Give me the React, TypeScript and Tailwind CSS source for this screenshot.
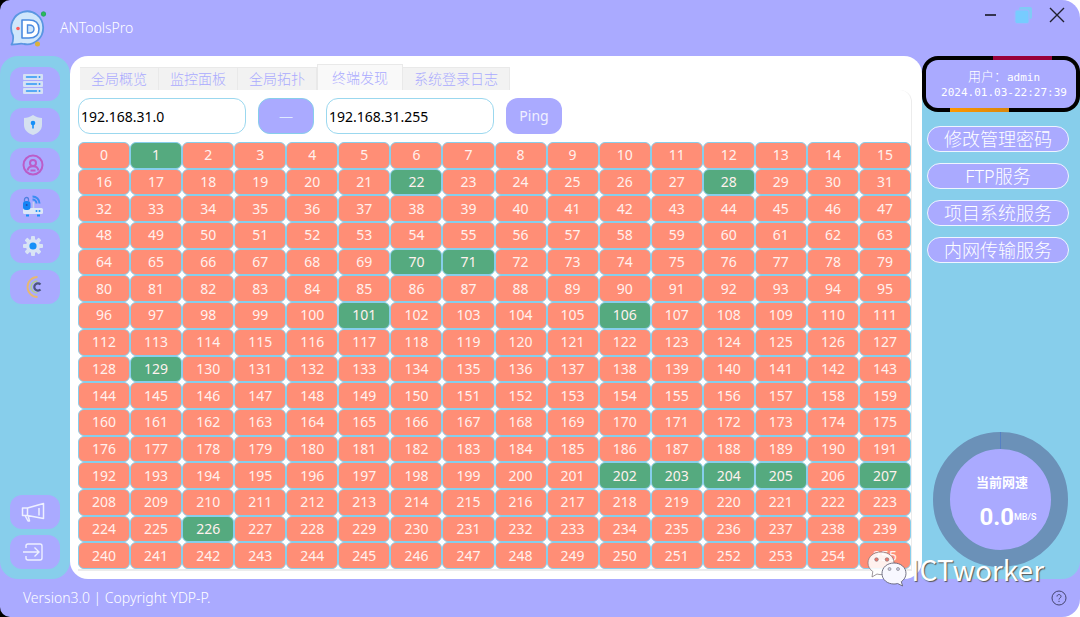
import React from "react";
import clsx from "clsx";

const tabs = ["全局概览", "监控面板", "全局拓扑", "终端发现", "系统登录日志"];
const activeTab = "终端发现";

const services = ["修改管理密码", "FTP服务", "项目系统服务", "内网传输服务"];

// last octets that answered the ping
const online = [1, 22, 28, 70, 71, 101, 106, 129, 202, 203, 204, 205, 207, 226];
const hosts = Array.from({ length: 256 }, (_, i) => i);

const Logo = () => (
  <svg width="38" height="38" viewBox="0 0 38 38" fill="none">
    <path
      d="M1.500 35.500c2-3 2-5 1.500-9A16 16.500 0 1 1 14 35C10 34 7 35.500 1.500 35.500z"
      fill="#cfe6fb"
      stroke="#5a96e2"
      strokeWidth="1.800"
      strokeLinejoin="round"
    />
    <path
      d="M12 11h7c6 0 10 3 10 9S25 29 19 29h-7z"
      fill="#fff"
      stroke="#4b8be0"
      strokeWidth="1.600"
      strokeLinejoin="round"
    />
    <path
      d="M17.500 16h1.500c3.500 0 5 1.500 5 4s-1.500 4-5 4h-1.500z"
      fill="#cfe6fb"
      stroke="#4b8be0"
      strokeWidth="1.400"
    />
    <circle cx="8" cy="19.500" r="1.800" fill="#ff5c5c" />
    <circle cx="33.500" cy="5" r="2.200" fill="#2dbb55" stroke="#27a56a" />
    <circle cx="27.500" cy="35" r="2.500" fill="#dcb13a" />
  </svg>
);

const ServerIcon = () => (
  <svg width="20" height="20" viewBox="0 0 20 20">
    {[0, 7, 14].map((y) => (
      <g key={y}>
        <rect x="0" y={y} width="20" height="6" rx="1" fill="#d5e1f5" />
        <path d={`M3.500 ${y + 3}h10`} stroke="#2a96f5" strokeWidth="1.500" strokeLinecap="round" />
        <circle cx="16.500" cy={y + 3} r="1" fill="#2a96f5" />
      </g>
    ))}
  </svg>
);

const ShieldIcon = () => (
  <svg width="20" height="20" viewBox="0 0 20 20">
    <path d="M10 0c3 2 6 2.800 9 3v7c0 5-4 8.500-9 10-5-1.500-9-5-9-10V3c3-.2 6-1 9-3z" fill="#d5e1f0" />
    <circle cx="10" cy="8" r="2.300" fill="#1590f8" />
    <path d="M10 8v5.500" stroke="#1590f8" strokeWidth="1.600" />
  </svg>
);

const UserIcon = () => (
  <svg width="22" height="22" viewBox="0 0 22 22" fill="none" stroke="#bb5cc8" strokeWidth="2">
    <circle cx="11" cy="11" r="9.500" />
    <circle cx="11" cy="9" r="3" />
    <path d="M5.500 16.500c.5-3 2.500-4.300 5.500-4.300s5 1.300 5.500 4.300" />
    <path d="M8.500 16.500h5" />
  </svg>
);

const RouterIcon = () => (
  <svg width="22" height="22" viewBox="0 0 22 22" fill="none">
    <path d="M11.500 7v6" stroke="#c9d5ea" strokeWidth="1.500" />
    <rect x="1" y="13" width="20" height="6" rx="1.500" fill="#dde7f7" />
    <rect x="1" y="6" width="7.500" height="9" rx="3" fill="#1685f5" />
    <path d="M2.500 7V4.500a2 2 0 0 1 4 0V7" stroke="#4f7fe0" strokeWidth="1.300" />
    <circle cx="4.700" cy="10" r="1" fill="#2a4bb0" />
    <path d="M10.500 1.500c4 0 7 3 7 7M10.500 4.500c2.300 0 4 1.700 4 4" stroke="#3a8df2" strokeWidth="2" />
    <path d="M4 20.500h3M15 20.500h3" stroke="#1b90f5" strokeWidth="1.800" />
    <circle cx="14.500" cy="16" r="1" fill="#1b90f5" />
    <circle cx="17.500" cy="16" r="1" fill="#1b90f5" />
  </svg>
);

const GearIcon = () => (
  <svg width="20" height="20" viewBox="0 0 20 20">
    <circle cx="10" cy="10" r="7" fill="#d9e4f5" />
    {[0, 45, 90, 135].map((a) => (
      <rect key={a} x="8" y="0" width="4" height="20" rx="1" fill="#d9e4f5" transform={`rotate(${a} 10 10)`} />
    ))}
    <circle cx="10" cy="10" r="3.600" fill="#1590f8" />
  </svg>
);

const CIcon = () => (
  <svg width="22" height="22" viewBox="0 0 22 22" fill="none">
    <path d="M15.500 1a10 10 0 0 0 0 20" stroke="#e8b871" strokeWidth="1.800" />
    <path d="M15.500 5a6.500 6 0 0 0 0 12" stroke="#b3cd8f" strokeWidth="1.600" />
    <path d="M18.500 8.500a3.600 3.600 0 1 0 0 5" stroke="#4c5580" strokeWidth="2.200" />
  </svg>
);

const HornIcon = () => (
  <svg width="24" height="20" viewBox="0 0 24 20" fill="none" stroke="#eef0ff" strokeWidth="1.500" strokeLinejoin="round">
    <path d="M1.500 6h5v7.500h-5zM6.500 6 22.500 1.500v15L6.500 13.500M18 6v7.500M4 13.500l3 5.500h1.500l-1.500-5.500" />
  </svg>
);

const ExitIcon = () => (
  <svg width="22" height="20" viewBox="0 0 22 20" fill="none" stroke="#eef0ff" strokeWidth="1.400">
    <path d="M4 6V4a2 2 0 0 1 2-2h12a2 2 0 0 1 2 2v12a2 2 0 0 1-2 2H6a2 2 0 0 1-2-2v-2" />
    <path d="M1 10h15.500M12.500 5.500 17 10l-4.500 4.500" />
  </svg>
);

const WechatIcon = () => (
  <svg width="40" height="36" viewBox="0 0 40 36">
    <path
      d="M14 1C6.500 1 1 5.800 1 12c0 3.600 1.800 6.500 4.800 8.500L5 26l5-3c1.300.4 2.600.6 4 .6C21.500 23.600 27 18.500 27 12S21.500 1 14 1z"
      fill="#fff"
      fillOpacity=".88"
      stroke="#776f76"
      strokeWidth=".7"
    />
    <circle cx="9.500" cy="8.500" r="1.800" fill="#ee786c" stroke="#776f76" strokeWidth=".6" />
    <circle cx="20" cy="8.500" r="1.800" fill="#ee786c" stroke="#776f76" strokeWidth=".6" />
    <path
      d="M27 12c-6.700 0-12 4.300-12 10.500s5.300 10.500 12 10.500c1.300 0 2.500-.2 3.600-.5l5 2.500-1.300-4.300C37.200 28.700 39 25.800 39 22.500 39 16.300 33.700 12 27 12z"
      fill="#f8f8ff"
      stroke="#66667a"
      strokeWidth=".9"
    />
    <circle cx="22.500" cy="18" r="1.500" fill="#c9c9e8" stroke="#777" strokeWidth=".6" />
    <circle cx="31" cy="18" r="1.500" fill="#c9c9e8" stroke="#777" strokeWidth=".6" />
  </svg>
);

interface SideButtonProps {
  label: string;
  children: React.ReactNode;
}

const SideButton: React.FC<SideButtonProps> = ({ label, children }) => (
  <button
    aria-label={label}
    className="flex h-[34px] w-[50px] items-center justify-center rounded-xl bg-[#aaaaff] pr-1"
  >
    {children}
  </button>
);

const inputClass =
  "h-9 w-[168px] rounded-xl border border-[#9bd8ef] bg-white px-[2px] text-sm text-black outline-none";

const App: React.FC = () => {
  return (
    <div className="bg-[linear-gradient(to_right,#000_50%,#fff_50%)] font-['Noto_Sans','Noto_Sans_CJK_SC',sans-serif] text-sm text-white">
      <div className="relative flex min-h-screen flex-col overflow-hidden rounded-l-[10px] rounded-r-[18px] bg-[#aaaaff]">
        <header className="flex h-14 shrink-0 items-start justify-between pr-[14px] pl-[10px]">
          <div className="flex h-14 items-center gap-3">
            <Logo />
            <h1 className="font-light">ANToolsPro</h1>
          </div>
          <div className="flex h-[30px] items-center gap-4">
            <button aria-label="minimize" className="px-[2px]">
              <svg width="12" height="18" viewBox="0 0 12 18" stroke="#34344f" strokeWidth="2">
                <path d="M1 9h11" />
              </svg>
            </button>
            <button aria-label="restore">
              <svg width="18" height="18" viewBox="0 0 18 18">
                <rect x="5" y="1" width="13" height="12" rx="2" fill="#80cbf5" />
                <rect x="1" y="4" width="14" height="13.500" rx="2" fill="#77ccff" stroke="#a0b4ff" />
              </svg>
            </button>
            <button aria-label="close">
              <svg width="18" height="18" viewBox="0 0 18 18" stroke="#20202e" strokeWidth="1.400">
                <path d="m2 2 14 14M16 2 2 16" />
              </svg>
            </button>
          </div>
        </header>

        <main className="flex flex-1">
          <nav className="flex w-[70px] shrink-0 flex-col items-center justify-between rounded-[18px] bg-[#87ceeb] pt-[11px] pb-[10px]">
            <div className="flex h-[237px] flex-col justify-between">
              <SideButton label="servers"><ServerIcon /></SideButton>
              <SideButton label="security"><ShieldIcon /></SideButton>
              <SideButton label="account"><UserIcon /></SideButton>
              <SideButton label="router"><RouterIcon /></SideButton>
              <SideButton label="settings"><GearIcon /></SideButton>
              <SideButton label="console"><CIcon /></SideButton>
            </div>
            <div className="flex flex-col gap-[6px]">
              <SideButton label="notice"><HornIcon /></SideButton>
              <SideButton label="exit"><ExitIcon /></SideButton>
            </div>
          </nav>

          <section className="flex min-w-0 flex-1 flex-col rounded-[18px] bg-white py-2 pr-[10px] pl-2">
            <div role="tablist" className="flex h-[26px] items-end pl-[2px]">
              {tabs.map((tab) => (
                <button
                  key={tab}
                  role="tab"
                  aria-selected={tab === activeTab}
                  className={clsx(
                    "border-t border-r border-[#e9e9e9] font-light text-[#aaaaff]",
                    tab === activeTab
                      ? "h-[26px] border-l bg-[#f9f9f9] px-[14px]"
                      : "h-[23px] bg-[#f2f2f2] px-[11px]",
                  )}
                >
                  {tab}
                </button>
              ))}
            </div>

            <div className="flex flex-1 flex-col rounded-t-xl border-r border-b-2 border-[#ececec] pt-2">
              <form className="flex gap-3" onSubmit={(e) => e.preventDefault()}>
                <input aria-label="start address" className={inputClass} defaultValue="192.168.31.0" />
                <button
                  type="button"
                  className="h-9 w-14 rounded-xl border border-[#87ceeb] bg-[#aaaaff] font-light text-[#dfeaff]"
                >
                  —
                </button>
                <input aria-label="end address" className={inputClass} defaultValue="192.168.31.255" />
                <button className="h-9 w-14 rounded-xl bg-[#aaaaff] text-[#f0f0ff]">Ping</button>
              </form>

              <div className="mt-2 grid flex-1 auto-rows-fr grid-cols-[repeat(16,minmax(0,1fr))]">
                {hosts.map((n) => (
                  <div
                    key={n}
                    className={clsx(
                      "flex items-center justify-center rounded-[6px] border border-[#87ceeb] leading-5 text-[#fff1ee]",
                      online.includes(n) ? "bg-[#55aa7f]" : "bg-[#ff8e76]",
                    )}
                  >
                    {n}
                  </div>
                ))}
              </div>
            </div>
          </section>

          <aside className="flex w-[158px] shrink-0 flex-col items-center rounded-r-[18px] bg-[linear-gradient(#aaaaff_28px,#87ceeb_28px)] pb-3">
            <div className="w-full rounded-2xl bg-[linear-gradient(80deg,transparent_18%,#ff9800_18%,#d9860c_55%,transparent_55%),linear-gradient(#000,#000)] bg-[length:100%_4px,100%_100%] bg-[position:bottom,center] bg-no-repeat">
              <div className="rounded-2xl bg-[linear-gradient(80deg,transparent_45%,#99003a_45%,#99003a_82%,transparent_82%)] bg-[length:100%_4px] bg-no-repeat p-1">
                <div className="flex h-12 flex-col items-center justify-center rounded-xl bg-[#aaaaff] pl-[6px] font-['DejaVu_Sans_Mono','Noto_Sans_CJK_SC',monospace] text-[11px] leading-[15px]">
                  <p>
                    <span className="text-[13px] font-light">用户：</span>admin
                  </p>
                  <p>2024.01.03-22:27:39</p>
                </div>
              </div>
            </div>

            <div className="mt-[14px] flex w-full flex-col gap-[11px] pr-[11px] pl-[5px]">
              {services.map((name) => (
                <button
                  key={name}
                  className="h-[26px] rounded-[13px] border border-[#eef5ff] bg-[#aaaaff] text-lg leading-6 font-light"
                >
                  {name}
                </button>
              ))}
            </div>

            <div className="relative mt-auto mr-[2px] flex size-[135px] flex-col items-center rounded-full border-[17px] border-[#6b91b8] bg-[#aaaaff] pt-6 font-[Roboto,'Noto_Sans_CJK_SC',sans-serif] font-bold">
              {/* needle at zero */}
              <span className="absolute -top-[17px] h-[17px] w-px bg-[#5580c4]" />
              <p className="pl-1 text-[13px] leading-5">当前网速</p>
              <p className="mt-3 ml-4 flex items-center text-2xl leading-6">
                0.0<span className="text-[9px] font-medium">MB/S</span>
              </p>
            </div>
          </aside>
        </main>

        <footer className="flex h-[38px] shrink-0 items-center justify-between pr-[13px] pl-[23px] font-light">
          <p>Version3.0 | Copyright YDP-P.</p>
          <button aria-label="help">
            <svg width="16" height="16" viewBox="0 0 16 16" fill="none" stroke="#45456e">
              <circle cx="8" cy="8" r="7" />
              <path d="M6 6.500c0-2.600 4-2.600 4 0 0 1.400-2 1.500-2 3M8 10.800v1.200" />
            </svg>
          </button>
        </footer>

        <div className="pointer-events-none absolute right-9 bottom-[30px] flex items-center gap-1">
          <WechatIcon />
          <span className="font-['Noto_Sans_CJK_SC',sans-serif] text-[28px] leading-9 [text-shadow:1px_1px_1px_#555]">
            ICTworker
          </span>
        </div>
      </div>
    </div>
  );
};

export default App;
